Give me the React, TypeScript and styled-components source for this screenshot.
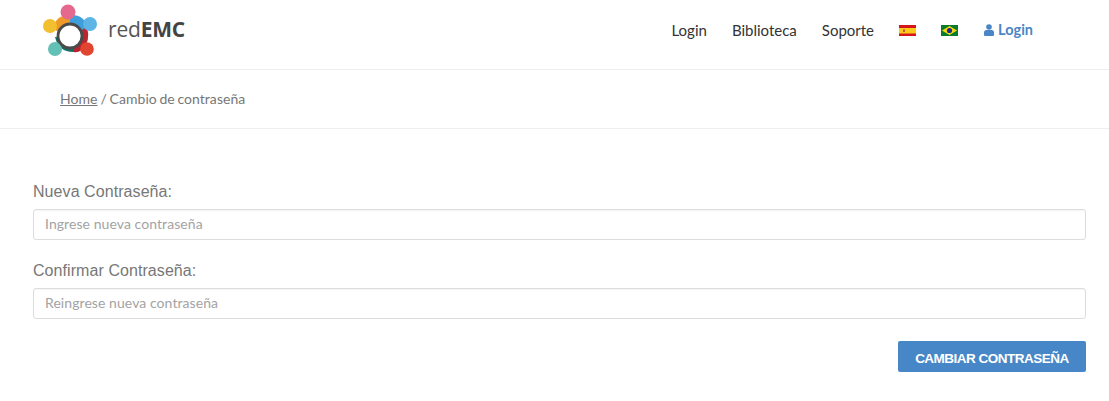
import React from "react";
import styled, { createGlobalStyle } from "styled-components";

const Global = createGlobalStyle`
  html, body { margin: 0; padding: 0; background: #fff; }
  body { font-family: "Lato", "Liberation Sans", sans-serif; color: #777; }
  * { box-sizing: border-box; }
`;

const Header = styled.header`
  height: 70px;
  border-bottom: 1px solid #eee;
  display: flex;
  align-items: flex-start;
  justify-content: space-between;
  padding-left: 42px;
  padding-right: 76px;
`;
const Brand = styled.a`
  display: flex;
  align-items: center;
  height: 60px;
  gap: 10px;
  text-decoration: none;
`;
const BrandName = styled.span`
  font-family: "Open Sans", sans-serif;
  font-size: 21px;
  color: #555;
  letter-spacing: -0.2px;
  margin-top: -2px;
  b { font-weight: 700; color: #444; }
`;
const Nav = styled.nav`
  display: flex;
  align-items: center;
  height: 60px;
`;
const NavLink = styled.a`
  font-size: 15px;
  color: #333;
  margin-right: 25px;
  line-height: 1;
  padding-top: 1px;
`;
const Flag = styled.svg`
  display: block;
  width: 17px;
  height: 11px;
  margin-right: 25px;
`;
const UserLink = styled.a`
  display: flex;
  align-items: center;
  gap: 4px;
  font-size: 14.5px;
  font-weight: 700;
  color: #4a86c5;
  margin-left: 1px;
  margin-top: -1px;
`;
const Breadcrumb = styled.div`
  height: 59px;
  border-bottom: 1px solid #eee;
  padding-left: 60px;
  padding-bottom: 2px;
  display: flex;
  align-items: center;
  font-size: 14px;
  color: #777;
  letter-spacing: 0.05px;
  white-space: pre;
  a { color: #777; text-decoration: underline; margin-right: 3px; }
  span { word-spacing: -1px; }
`;
const Form = styled.form`
  padding: 52px 23px 0 33px;
  display: flex;
  flex-direction: column;
`;
const Label = styled.label`
  font-family: "Liberation Sans", Arial, sans-serif;
  font-size: 16px;
  line-height: 22px;
  letter-spacing: 0.07px;
  color: #777;
  margin-bottom: 6px;
`;
const Input = styled.input`
  height: 31px;
  border: 1px solid #ddd;
  border-radius: 3px;
  padding: 0 11px 2px;
  font-family: "Lato", sans-serif;
  font-size: 14px;
  letter-spacing: 0.07px;
  margin-bottom: 20px;
  box-shadow: inset 0 1px 1px rgba(0, 0, 0, 0.04);
  &::placeholder { color: #a3a3a3; opacity: 1; }
`;
const Actions = styled.div`
  display: flex;
  justify-content: flex-end;
  margin-top: 2px;
`;
const Submit = styled.button`
  width: 188px;
  height: 31px;
  border: 0;
  border-radius: 2px;
  background: #4887c7;
  color: #fff;
  font-family: "Liberation Sans", Arial, sans-serif;
  font-weight: 700;
  font-size: 13.5px;
  letter-spacing: -0.5px;
  padding: 3px 0 0;
`;

const Logo = () => (
  <svg width="56" height="58" viewBox="0 0 56 58" aria-hidden>
    <path d="M11 28 Q14 13 28 14 L28 36 Z" fill="#ef9a26" />
    <path d="M28 14 Q42 13 46 27 L28 36 Z" fill="#3f9fdd" />
    <path d="M13 36 L28 36 L33 51 Q17 52 13 36 Z" fill="#136f63" />
    <path d="M28 36 L45 26 Q49 40 40 49 Q35 52 32 51 Z" fill="#b8252f" />
    <circle cx="26" cy="11" r="7.5" fill="#e5688f" />
    <circle cx="48" cy="23" r="7" fill="#5cb5e4" />
    <circle cx="8" cy="25" r="7" fill="#f2bf30" />
    <circle cx="13" cy="48" r="7" fill="#62c0b5" />
    <circle cx="45" cy="48" r="6.8" fill="#e2452f" />
    <circle cx="28" cy="35" r="12" fill="#fff" stroke="#4a4a4a" strokeWidth="2.8" />
  </svg>
);

const SpainFlag = () => (
  <Flag viewBox="0 0 17 11">
    <rect width="17" height="11" fill="#d4161c" />
    <rect y="3" width="17" height="5.5" fill="#fbcb17" />
    <rect x="4" y="4.5" width="2" height="2.5" fill="#c2553a" />
  </Flag>
);

const BrazilFlag = () => (
  <Flag viewBox="0 0 17 11">
    <rect width="17" height="11" fill="#0a7a2c" />
    <path d="M8.5 1 L16 5.5 L8.5 10 L1 5.5 Z" fill="#f5d90f" />
    <circle cx="8.5" cy="5.5" r="2.6" fill="#1c2a8c" />
  </Flag>
);

const UserIcon = () => (
  <svg width="10" height="12" viewBox="0 0 10 12" aria-hidden>
    <circle cx="5" cy="3" r="2.8" fill="#4a86c5" />
    <path d="M0 11 V8.5 Q0 6 2.5 6 H7.5 Q10 6 10 8.5 V11 Q10 12 9 12 H1 Q0 12 0 11 Z" fill="#4a86c5" />
  </svg>
);

export default function App() {
  return (
    <>
      <Global />
      <Header>
        <Brand>
          <Logo />
          <BrandName>red<b>EMC</b></BrandName>
        </Brand>
        <Nav>
          <NavLink>Login</NavLink>
          <NavLink>Biblioteca</NavLink>
          <NavLink>Soporte</NavLink>
          <SpainFlag />
          <BrazilFlag />
          <UserLink><UserIcon />Login</UserLink>
        </Nav>
      </Header>
      <Breadcrumb><a>Home</a><span>/ Cambio de contraseña</span></Breadcrumb>
      <Form>
        <Label>Nueva Contraseña:</Label>
        <Input placeholder="Ingrese nueva contraseña" />
        <Label>Confirmar Contraseña:</Label>
        <Input placeholder="Reingrese nueva contraseña" />
        <Actions><Submit type="button">CAMBIAR CONTRASEÑA</Submit></Actions>
      </Form>
    </>
  );
}
